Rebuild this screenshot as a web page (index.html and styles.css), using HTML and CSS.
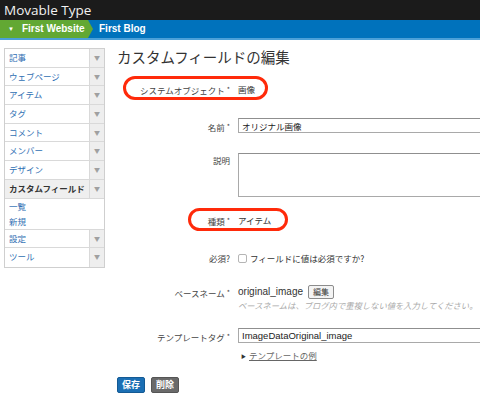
FILE: index.html
```html
<!DOCTYPE html>
<html lang="ja">
<head>
    <meta charset="UTF-8">
    <title>カスタムフィールドの編集 | Movable Type</title>
    <link rel="stylesheet" href="styles.css">
</head>
<body>
    <div class="brand">Movable Type</div>
    <div class="scope-nav">
        <div class="scope-website"><span class="scope-toggle">▼</span>First Website</div>
        <div class="scope-blog">First Blog</div>
    </div>

    <div class="container">
        <!-- Side menu -->
        <ul class="menu">
            <li class="menu-item"><a href="#">記事</a><span class="menu-arrow">▼</span></li>
            <li class="menu-item"><a href="#">ウェブページ</a><span class="menu-arrow">▼</span></li>
            <li class="menu-item"><a href="#">アイテム</a><span class="menu-arrow">▼</span></li>
            <li class="menu-item"><a href="#">タグ</a><span class="menu-arrow">▼</span></li>
            <li class="menu-item"><a href="#">コメント</a><span class="menu-arrow">▼</span></li>
            <li class="menu-item"><a href="#">メンバー</a><span class="menu-arrow">▼</span></li>
            <li class="menu-item"><a href="#">デザイン</a><span class="menu-arrow">▼</span></li>
            <li class="menu-item active"><a href="#">カスタムフィールド</a><span class="menu-arrow">▼</span></li>
            <li class="submenu">
                <a href="#">一覧</a>
                <a href="#">新規</a>
            </li>
            <li class="menu-item"><a href="#">設定</a><span class="menu-arrow">▼</span></li>
            <li class="menu-item"><a href="#">ツール</a><span class="menu-arrow">▼</span></li>
        </ul>

        <!-- Edit form -->
        <div class="content">
            <h1>カスタムフィールドの編集</h1>

            <div class="field field-object">
                <div class="mark mark-object"></div>
                <label>システムオブジェクト <span class="req">*</span></label>
                <div class="value">画像</div>
            </div>

            <div class="field field-name">
                <label>名前 <span class="req">*</span></label>
                <div class="value"><input type="text" class="text" value="オリジナル画像"></div>
            </div>

            <div class="field field-desc">
                <label>説明</label>
                <div class="value"><textarea class="text"></textarea></div>
            </div>

            <div class="field field-type">
                <div class="mark mark-type"></div>
                <label>種類 <span class="req">*</span></label>
                <div class="value">アイテム</div>
            </div>

            <div class="field field-required">
                <label>必須?</label>
                <div class="value"><span class="checkbox"></span>フィールドに値は必須ですか?</div>
            </div>

            <div class="field field-basename">
                <label>ベースネーム <span class="req">*</span></label>
                <div class="value">
                    <div class="basename"><span class="latin">original_image</span><button class="edit-button">編集</button></div>
                    <div class="hint">ベースネームは、ブログ内で重複しない値を入力してください。</div>
                </div>
            </div>

            <div class="field field-tag">
                <label>テンプレートタグ <span class="req">*</span></label>
                <div class="value">
                    <input type="text" class="text latin" value="ImageDataOriginal_image">
                    <div class="example"><span class="toggle">▶</span><a href="#">テンプレートの例</a></div>
                </div>
            </div>

            <div class="actions">
                <button class="button save">保存</button>
                <button class="button delete">削除</button>
            </div>
        </div>
    </div>
</body>
</html>
```

FILE: styles.css
```css
html, body {
    overflow: hidden;
}

body {
    margin: 0;
    font-family: "Noto Sans CJK JP", "Liberation Sans", sans-serif;
    font-size: 8.5px;
    color: #333;
    background: #fff;
}

a {
    color: #2f6fb3;
    text-decoration: none;
}

.latin {
    font-family: "Liberation Sans", Arial, sans-serif;
}

/* Header */
.brand {
    height: 20px;
    line-height: 20px;
    padding-left: 4px;
    background-color: #1b1b1b;
    color: #f2f2f2;
    font-family: "Open Sans", sans-serif;
    font-size: 13.5px;
}

.scope-nav {
    display: flex;
    height: 18px;
    background-color: #0072bc;
    border-bottom: 2px solid #4ba0d8;
    font-family: "Liberation Sans", Arial, sans-serif;
    font-size: 10px;
    font-weight: bold;
    color: #fff;
    line-height: 18px;
}

.scope-website {
    position: relative;
    width: 80px;
    padding-left: 8px;
    background-color: #62a833;
}

.scope-website::after {
    content: "";
    position: absolute;
    top: 0;
    right: -5px;
    border-top: 9px solid transparent;
    border-bottom: 9px solid transparent;
    border-left: 5px solid #62a833;
}

.scope-toggle {
    font-size: 6px;
    margin-right: 8px;
    vertical-align: 1px;
}

.scope-blog {
    padding-left: 11px;
}

/* Layout */
.container {
    display: flex;
    align-items: flex-start;
    gap: 12px;
    padding-left: 4px;
}

/* Side menu */
.menu {
    flex-shrink: 0;
    list-style: none;
    margin: 8px 0 0;
    padding: 0;
    width: 99px;
    border: 1px solid #cfcfcf;
}

.menu-item {
    display: flex;
    height: 18.7px;
    box-sizing: border-box;
    border-bottom: 1px solid #d9d9d9;
    line-height: 17.7px;
}

.menu-item a {
    flex: 1;
    padding-left: 4px;
    white-space: nowrap;
}

.menu-arrow {
    width: 14px;
    text-align: center;
    background-color: #eeeeee;
    border-left: 1px solid #d9d9d9;
    color: #a0a0a0;
    font-size: 6px;
}

.menu-item.active {
    background-color: #efefef;
}

.menu-item.active a {
    color: #333;
    font-weight: bold;
}

.submenu {
    display: flex;
    flex-direction: column;
    height: 31px;
    box-sizing: border-box;
    padding-left: 4px;
    border-bottom: 1px solid #d9d9d9;
}

.submenu a {
    line-height: 15px;
}

.menu-item:last-child {
    border-bottom: none;
}

/* Content */
.content {
    flex: 1;
    min-width: 0;
}

h1 {
    margin: 8px 0 0;
    height: 18px;
    line-height: 18px;
    font-size: 14.5px;
    font-weight: normal;
    color: #333;
}

.field {
    position: relative;
    display: flex;
    line-height: 16px;
}

.field label {
    flex-shrink: 0;
    width: 113px;
    padding-right: 8px;
    text-align: right;
    color: #444;
}

.req {
    font-size: 7px;
    vertical-align: 2px;
}

.value {
    flex: 1;
}

.field-object { margin-top: 15px; }
.field-name { margin-top: 20px; }
.field-desc { margin-top: 18px; }
.field-type { margin-top: 15px; }
.field-required { margin-top: 21px; }
.field-basename { margin-top: 18px; }
.field-tag { margin-top: 18px; }

.field-desc label {
    line-height: 14px;
}

.text {
    display: block;
    width: 260px;
    height: 15px;
    margin: 0;
    padding: 0 3px;
    box-sizing: border-box;
    border: 1px solid #a9a9a9;
    border-top-color: #8f8f8f;
    font-family: "Noto Sans CJK JP", sans-serif;
    font-size: 8.5px;
    color: #222;
    background: #fff;
}

.text.latin {
    font-family: "Liberation Sans", Arial, sans-serif;
    font-size: 9.5px;
}

textarea.text {
    height: 44px;
    resize: none;
}

.checkbox {
    display: inline-block;
    width: 7px;
    height: 7px;
    margin-right: 3px;
    border: 1px solid #b5b5b5;
    border-radius: 2px;
    vertical-align: -1px;
}

.basename {
    display: flex;
    align-items: center;
    height: 16px;
}

.basename .latin {
    font-size: 10px;
}

.edit-button {
    height: 14px;
    margin-left: 5px;
    padding: 0 4px;
    border: 1px solid #8c8c8c;
    border-radius: 2px;
    background: #f4f4f4;
    font-family: "Noto Sans CJK JP", sans-serif;
    font-size: 8px;
    line-height: 12px;
    color: #333;
}

.hint {
    line-height: 10px;
    font-size: 8.3px;
    font-style: italic;
    color: #aaa;
}

.example {
    margin-top: 5px;
    line-height: 14px;
}

.example .toggle {
    font-size: 5px;
    margin: 0 3px;
    vertical-align: 1px;
    color: #333;
}

.example a {
    color: #666;
    text-decoration: underline;
}

/* Annotation marks */
.mark {
    position: absolute;
    border: 3px solid #ff2a0a;
    border-radius: 13px;
}

.mark-object {
    left: 6px;
    top: -5px;
    width: 139px;
    height: 18px;
}

.mark-type {
    left: 71px;
    top: -4px;
    width: 94px;
    height: 17px;
}

/* Buttons */
.actions {
    display: flex;
    gap: 6px;
    margin-top: 14px;
}

.button {
    height: 16px;
    padding: 0 4px;
    border: 1px solid;
    border-radius: 2px;
    font-family: "Noto Sans CJK JP", sans-serif;
    font-size: 9px;
    font-weight: bold;
    line-height: 14px;
    color: #fff;
}

.save {
    background-color: #1b6fb4;
    border-color: #145a94;
}

.delete {
    background-color: #6a6a6a;
    border-color: #555;
}
```
